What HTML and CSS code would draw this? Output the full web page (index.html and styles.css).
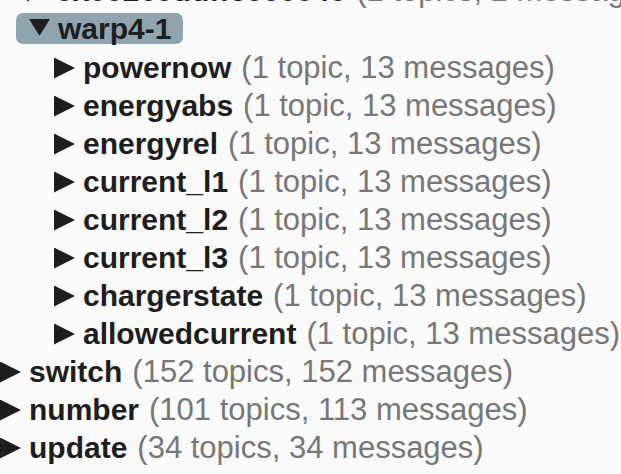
FILE: index.html
```html
<!DOCTYPE html>
<html lang="en">

<head>
  <meta charset="UTF-8">
  <title>Topic Tree</title>
  <link rel="stylesheet" href="styles.css">
</head>

<body>
  <ul class="tree">
    <li>
      <ul class="tree level">
        <li class="node"><span class="arrow right"></span><b>0x00260ddffe000545</b> <span class="meta">(1 topics, 1 messages)</span></li>
        <li>
          <div class="node selected"><span class="arrow down"></span><b>warp4-1</b></div>
          <ul class="tree level">
            <li class="node"><span class="arrow right"></span><b>powernow</b> <span class="meta">(1 topic, 13 messages)</span></li>
            <li class="node"><span class="arrow right"></span><b>energyabs</b> <span class="meta">(1 topic, 13 messages)</span></li>
            <li class="node"><span class="arrow right"></span><b>energyrel</b> <span class="meta">(1 topic, 13 messages)</span></li>
            <li class="node"><span class="arrow right"></span><b>current_l1</b> <span class="meta">(1 topic, 13 messages)</span></li>
            <li class="node"><span class="arrow right"></span><b>current_l2</b> <span class="meta">(1 topic, 13 messages)</span></li>
            <li class="node"><span class="arrow right"></span><b>current_l3</b> <span class="meta">(1 topic, 13 messages)</span></li>
            <li class="node"><span class="arrow right"></span><b>chargerstate</b> <span class="meta">(1 topic, 13 messages)</span></li>
            <li class="node"><span class="arrow right"></span><b>allowedcurrent</b> <span class="meta">(1 topic, 13 messages)</span></li>
          </ul>
        </li>
      </ul>
    </li>
    <li class="node"><span class="arrow right"></span><b>switch</b> <span class="meta">(152 topics, 152 messages)</span></li>
    <li class="node"><span class="arrow right"></span><b>number</b> <span class="meta">(101 topics, 113 messages)</span></li>
    <li class="node"><span class="arrow right"></span><b>update</b> <span class="meta">(34 topics, 34 messages)</span></li>
  </ul>
</body>

</html>
```

FILE: styles.css
```css
* {
  margin: 0;
  padding: 0;
  box-sizing: border-box;
}

body {
  font-family: 'Liberation Sans', Arial, sans-serif;
  font-size: 30px;
  background-color: #fafafa;
  color: #222;
  overflow: hidden;
}

.tree {
  list-style: none;
}

body > .tree {
  margin-top: -28px;
}

.level {
  margin-left: 27px;
}

.node {
  display: flex;
  align-items: center;
  height: 38px;
  white-space: nowrap;
}

.node b {
  font-weight: bold;
  color: #1e1e1e;
}

.meta {
  font-size: 31px;
  color: #777;
  margin-left: 10px;
}

.arrow {
  display: inline-block;
  width: 21px;
  height: 21px;
  margin-right: 8px;
  background-color: #1e1e1e;
  flex-shrink: 0;
}

.arrow.right {
  clip-path: polygon(0 0, 100% 50%, 0 100%);
}

.arrow.down {
  clip-path: polygon(0 5%, 100% 5%, 50% 85%);
}

.selected {
  display: inline-flex;
  height: 31px;
  margin: 3px 0 5px -11px;
  padding: 0 12px 0 13px;
  border-radius: 7px;
  background-color: #90a4ae;
}
```
